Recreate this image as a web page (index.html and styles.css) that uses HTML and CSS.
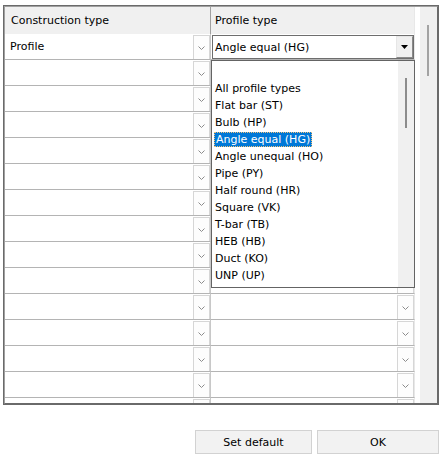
FILE: index.html
```html
<!DOCTYPE html>
<html>
<head>
<meta charset="utf-8">
<link rel="stylesheet" href="styles.css">
</head>
<body>
<div class="frame">
  <div class="frame-inner">
    <div class="grid">
      <div class="row head">
        <div class="cell c1 h">Construction type</div>
        <div class="cell c2 h">Profile type</div>
      </div>
      <div class="row">
        <div class="cell c1"><span class="val">Profile</span><span class="dd"><svg width="7" height="4" viewBox="0 0 7 4"><polyline points="0.5,0.5 3.5,3.5 6.5,0.5" fill="none" stroke="#8c8c8c" stroke-width="1"/></svg></span></div>
        <div class="cell c2 active">
          <div class="combo">
            <span class="val">Angle equal (HG)</span>
            <span class="arrow"><svg width="7" height="4" viewBox="0 0 7 4"><polygon points="0,0 7,0 3.5,4" fill="#000"/></svg></span>
          </div>
          <div class="list">
            <div class="items">
              <div class="item">&nbsp;</div>
              <div class="item">All profile types</div>
              <div class="item">Flat bar (ST)</div>
              <div class="item">Bulb (HP)</div>
              <div class="item"><span class="sel">Angle equal (HG)</span></div>
              <div class="item">Angle unequal (HO)</div>
              <div class="item">Pipe (PY)</div>
              <div class="item">Half round (HR)</div>
              <div class="item">Square (VK)</div>
              <div class="item">T-bar (TB)</div>
              <div class="item">HEB (HB)</div>
              <div class="item">Duct (KO)</div>
              <div class="item">UNP (UP)</div>
            </div>
            <div class="lscroll"><div class="lthumb"></div></div>
          </div>
        </div>
      </div>
      <div class="row"><div class="cell c1"><span class="val"></span><span class="dd"><svg width="7" height="4" viewBox="0 0 7 4"><polyline points="0.5,0.5 3.5,3.5 6.5,0.5" fill="none" stroke="#8c8c8c"/></svg></span></div><div class="cell c2"><span class="val"></span><span class="dd"><svg width="7" height="4" viewBox="0 0 7 4"><polyline points="0.5,0.5 3.5,3.5 6.5,0.5" fill="none" stroke="#8c8c8c"/></svg></span></div></div>
      <div class="row"><div class="cell c1"><span class="val"></span><span class="dd"><svg width="7" height="4" viewBox="0 0 7 4"><polyline points="0.5,0.5 3.5,3.5 6.5,0.5" fill="none" stroke="#8c8c8c"/></svg></span></div><div class="cell c2"><span class="val"></span><span class="dd"><svg width="7" height="4" viewBox="0 0 7 4"><polyline points="0.5,0.5 3.5,3.5 6.5,0.5" fill="none" stroke="#8c8c8c"/></svg></span></div></div>
      <div class="row"><div class="cell c1"><span class="val"></span><span class="dd"><svg width="7" height="4" viewBox="0 0 7 4"><polyline points="0.5,0.5 3.5,3.5 6.5,0.5" fill="none" stroke="#8c8c8c"/></svg></span></div><div class="cell c2"><span class="val"></span><span class="dd"><svg width="7" height="4" viewBox="0 0 7 4"><polyline points="0.5,0.5 3.5,3.5 6.5,0.5" fill="none" stroke="#8c8c8c"/></svg></span></div></div>
      <div class="row"><div class="cell c1"><span class="val"></span><span class="dd"><svg width="7" height="4" viewBox="0 0 7 4"><polyline points="0.5,0.5 3.5,3.5 6.5,0.5" fill="none" stroke="#8c8c8c"/></svg></span></div><div class="cell c2"><span class="val"></span><span class="dd"><svg width="7" height="4" viewBox="0 0 7 4"><polyline points="0.5,0.5 3.5,3.5 6.5,0.5" fill="none" stroke="#8c8c8c"/></svg></span></div></div>
      <div class="row"><div class="cell c1"><span class="val"></span><span class="dd"><svg width="7" height="4" viewBox="0 0 7 4"><polyline points="0.5,0.5 3.5,3.5 6.5,0.5" fill="none" stroke="#8c8c8c"/></svg></span></div><div class="cell c2"><span class="val"></span><span class="dd"><svg width="7" height="4" viewBox="0 0 7 4"><polyline points="0.5,0.5 3.5,3.5 6.5,0.5" fill="none" stroke="#8c8c8c"/></svg></span></div></div>
      <div class="row"><div class="cell c1"><span class="val"></span><span class="dd"><svg width="7" height="4" viewBox="0 0 7 4"><polyline points="0.5,0.5 3.5,3.5 6.5,0.5" fill="none" stroke="#8c8c8c"/></svg></span></div><div class="cell c2"><span class="val"></span><span class="dd"><svg width="7" height="4" viewBox="0 0 7 4"><polyline points="0.5,0.5 3.5,3.5 6.5,0.5" fill="none" stroke="#8c8c8c"/></svg></span></div></div>
      <div class="row"><div class="cell c1"><span class="val"></span><span class="dd"><svg width="7" height="4" viewBox="0 0 7 4"><polyline points="0.5,0.5 3.5,3.5 6.5,0.5" fill="none" stroke="#8c8c8c"/></svg></span></div><div class="cell c2"><span class="val"></span><span class="dd"><svg width="7" height="4" viewBox="0 0 7 4"><polyline points="0.5,0.5 3.5,3.5 6.5,0.5" fill="none" stroke="#8c8c8c"/></svg></span></div></div>
      <div class="row"><div class="cell c1"><span class="val"></span><span class="dd"><svg width="7" height="4" viewBox="0 0 7 4"><polyline points="0.5,0.5 3.5,3.5 6.5,0.5" fill="none" stroke="#8c8c8c"/></svg></span></div><div class="cell c2"><span class="val"></span><span class="dd"><svg width="7" height="4" viewBox="0 0 7 4"><polyline points="0.5,0.5 3.5,3.5 6.5,0.5" fill="none" stroke="#8c8c8c"/></svg></span></div></div>
      <div class="row"><div class="cell c1"><span class="val"></span><span class="dd"><svg width="7" height="4" viewBox="0 0 7 4"><polyline points="0.5,0.5 3.5,3.5 6.5,0.5" fill="none" stroke="#8c8c8c"/></svg></span></div><div class="cell c2"><span class="val"></span><span class="dd"><svg width="7" height="4" viewBox="0 0 7 4"><polyline points="0.5,0.5 3.5,3.5 6.5,0.5" fill="none" stroke="#8c8c8c"/></svg></span></div></div>
      <div class="row"><div class="cell c1"><span class="val"></span><span class="dd"><svg width="7" height="4" viewBox="0 0 7 4"><polyline points="0.5,0.5 3.5,3.5 6.5,0.5" fill="none" stroke="#8c8c8c"/></svg></span></div><div class="cell c2"><span class="val"></span><span class="dd"><svg width="7" height="4" viewBox="0 0 7 4"><polyline points="0.5,0.5 3.5,3.5 6.5,0.5" fill="none" stroke="#8c8c8c"/></svg></span></div></div>
      <div class="row"><div class="cell c1"><span class="val"></span><span class="dd"><svg width="7" height="4" viewBox="0 0 7 4"><polyline points="0.5,0.5 3.5,3.5 6.5,0.5" fill="none" stroke="#8c8c8c"/></svg></span></div><div class="cell c2"><span class="val"></span><span class="dd"><svg width="7" height="4" viewBox="0 0 7 4"><polyline points="0.5,0.5 3.5,3.5 6.5,0.5" fill="none" stroke="#8c8c8c"/></svg></span></div></div>
      <div class="row"><div class="cell c1"><span class="val"></span><span class="dd"><svg width="7" height="4" viewBox="0 0 7 4"><polyline points="0.5,0.5 3.5,3.5 6.5,0.5" fill="none" stroke="#8c8c8c"/></svg></span></div><div class="cell c2"><span class="val"></span><span class="dd"><svg width="7" height="4" viewBox="0 0 7 4"><polyline points="0.5,0.5 3.5,3.5 6.5,0.5" fill="none" stroke="#8c8c8c"/></svg></span></div></div>
      <div class="row"><div class="cell c1"><span class="val"></span><span class="dd"><svg width="7" height="4" viewBox="0 0 7 4"><polyline points="0.5,0.5 3.5,3.5 6.5,0.5" fill="none" stroke="#8c8c8c"/></svg></span></div><div class="cell c2"><span class="val"></span><span class="dd"><svg width="7" height="4" viewBox="0 0 7 4"><polyline points="0.5,0.5 3.5,3.5 6.5,0.5" fill="none" stroke="#8c8c8c"/></svg></span></div></div>
      <div class="row"><div class="cell c1"><span class="val"></span><span class="dd"><svg width="7" height="4" viewBox="0 0 7 4"><polyline points="0.5,0.5 3.5,3.5 6.5,0.5" fill="none" stroke="#8c8c8c"/></svg></span></div><div class="cell c2"><span class="val"></span><span class="dd"><svg width="7" height="4" viewBox="0 0 7 4"><polyline points="0.5,0.5 3.5,3.5 6.5,0.5" fill="none" stroke="#8c8c8c"/></svg></span></div></div>
    </div>
    <div class="vscroll"><div class="thumb"></div></div>
  </div>
</div>
<div class="footer">
  <button class="btn b1">Set default</button>
  <button class="btn b2">OK</button>
</div>
</body>
</html>
```

FILE: styles.css
```css
body {
  margin: 0;
  background: #fff;
  font-family: "DejaVu Sans", Verdana, sans-serif;
  font-size: 11px;
  color: #000;
}
.frame {
  margin: 5px 0 0 3px;
  width: 436px;
  height: 400px;
  box-sizing: border-box;
  border: 1px solid #6a6a6a;
}
.frame-inner {
  height: 100%;
  box-sizing: border-box;
  border-style: solid;
  border-width: 1px;
  border-color: #a0a0a0 #6a6a6a #6a6a6a #a0a0a0;
  display: flex;
  overflow: hidden;
}
.grid {
  width: 415px;
  flex: none;
  overflow: hidden;
  background: #fff;
}
.vscroll {
  width: 17px;
  flex: none;
  background: #f0f0f0;
}
.thumb {
  margin: 18px 0 0 7px;
  width: 2px;
  height: 51px;
  background: #a3a3a3;
}
.row {
  display: flex;
  height: 26px;
}
.row.head {
  height: 27px;
}
.cell {
  box-sizing: border-box;
  display: flex;
  align-items: stretch;
  border-bottom: 1px solid #b4b4b4;
}
.cell.c1 {
  width: 206px;
  border-right: 1px solid #c8c8c8;
}
.cell.c2 {
  width: 204px;
  border-right: 1px solid #e8e8e8;
}
.cell.h {
  background: #f0f0f0;
  border-bottom: none;
  align-items: center;
  padding-left: 6px;
}
.cell.c1.h {
  border-right: 1px solid #a0a0a0;
}
.cell.c2.h {
  padding-left: 4px;
}
.val {
  flex: 1;
  display: flex;
  align-items: center;
  padding-left: 5px;
  white-space: nowrap;
}
.dd {
  width: 17px;
  flex: none;
  box-sizing: border-box;
  margin-top: 1px;
  border: 1px solid #d6d6d6;
  border-bottom: none;
  background: #fdfdfd;
  display: flex;
  align-items: center;
  justify-content: center;
}
.cell.active {
  position: relative;
}
.combo {
  flex: 1;
  margin: 1px 0 0 1px;
  height: 24px;
  box-sizing: border-box;
  border: 1px solid #6e6e6e;
  display: flex;
  background: #fff;
}
.combo .val {
  padding-left: 2px;
}
.arrow {
  width: 17px;
  flex: none;
  box-sizing: border-box;
  background: #f0f0f0;
  border: 1px solid;
  border-color: #e6e6e6 #8a8a8a #8a8a8a #e6e6e6;
  display: flex;
  align-items: center;
  justify-content: center;
}
.list {
  position: absolute;
  left: 0;
  top: 26px;
  width: 204px;
  height: 228px;
  box-sizing: border-box;
  border: 1px solid #646464;
  background: #fff;
  display: flex;
  z-index: 5;
}
.items {
  flex: 1;
  padding-top: 2px;
  overflow: hidden;
}
.item {
  height: 17px;
  line-height: 17px;
  padding-left: 3px;
  white-space: nowrap;
}
.sel {
  display: inline-block;
  vertical-align: top;
  height: 15px;
  line-height: 15px;
  margin: 1px 0 0 -1px;
  padding: 0 2px;
  background: #0078d7;
  color: #fff;
  outline: 1px dotted #f2c27a;
  outline-offset: -1px;
}
.lscroll {
  width: 16px;
  flex: none;
  background: #f0f0f0;
}
.lthumb {
  margin: 17px 0 0 7px;
  width: 2px;
  height: 50px;
  background: #8c8c8c;
}
.footer {
  display: flex;
  justify-content: flex-end;
  gap: 5px;
  margin-top: 25px;
  padding-right: 4px;
}
.btn {
  font-family: inherit;
  font-size: 11px;
  color: #000;
  height: 24px;
  padding: 0;
  background: #f2f2f2;
  border: 1px solid #d2d2d2;
}
.b1 {
  width: 117px;
}
.b2 {
  width: 122px;
}
```
